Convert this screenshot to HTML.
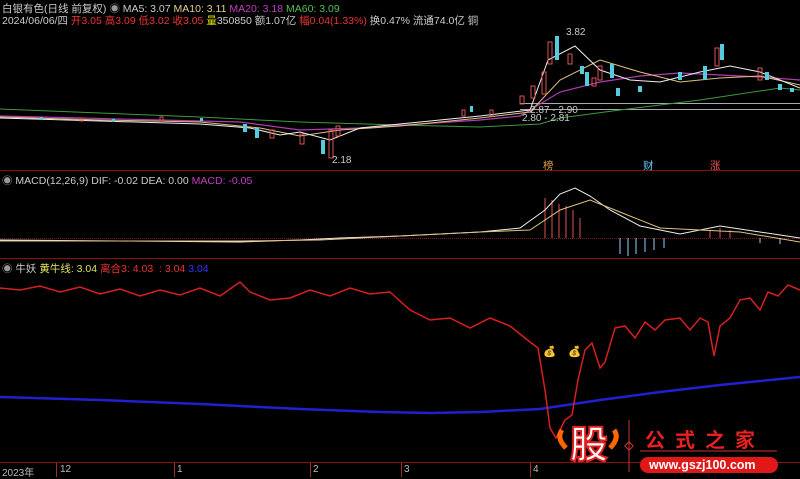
<!DOCTYPE html>
<html><head><meta charset="utf-8"><style>
body{margin:0;background:#000;width:800px;height:477px;overflow:hidden;font-family:"Liberation Sans","Noto Sans CJK SC",sans-serif}
.t{position:absolute;font-size:10.5px;white-space:nowrap;color:#ccc}
</style></head><body>
<svg width="800" height="477" style="position:absolute;left:0;top:0" xmlns="http://www.w3.org/2000/svg">
<line x1="0" y1="170.5" x2="800" y2="170.5" stroke="#8a1010"/>
<line x1="0" y1="258.5" x2="800" y2="258.5" stroke="#8a1010"/>
<line x1="0" y1="462.5" x2="800" y2="462.5" stroke="#8a1010"/>
<line x1="520" y1="103.5" x2="800" y2="103.5" stroke="#aaa"/>
<line x1="520" y1="109.5" x2="800" y2="109.5" stroke="#aaa"/>
<polyline fill="none" stroke="#3c9a3c" stroke-width="1" points="0,109 100,113 200,117 300,122 400,125 480,127 540,124 560,118 620,110 700,100 780,88 800,90"/>
<polyline fill="none" stroke="#b03cb0" stroke-width="1.2" points="0,116 80,118 160,120 240,122 300,130 360,128 420,124 480,120 520,116 560,92 600,82 640,76 680,73 720,75 760,77 800,80"/>
<polyline fill="none" stroke="#e0c080" stroke-width="1" points="0,117 100,120 200,122 260,128 300,136 340,130 400,126 480,118 530,112 560,80 600,60 640,72 680,82 720,78 760,76 800,85"/>
<polyline fill="none" stroke="#eee" stroke-width="1" points="0,118 100,121 200,124 250,128 280,135 300,132 330,140 360,128 420,122 480,116 530,110 548,60 575,46 600,70 630,80 660,82 700,72 730,66 760,72 800,88"/>
<g stroke-width="1">
<rect x="40" y="117" width="3" height="3" fill="#5cd"/><rect x="80" y="118" width="3" height="3" fill="none" stroke="#d55"/><rect x="112" y="119" width="3" height="3" fill="#5cd"/><rect x="160" y="117" width="3" height="4" fill="none" stroke="#d55"/><rect x="200" y="118" width="3" height="3" fill="#5cd"/>
<rect x="243" y="124" width="4" height="8" fill="#5cd"/><rect x="255" y="128" width="4" height="10" fill="#5cd"/>
<rect x="270" y="130" width="4" height="8" fill="none" stroke="#d55"/><rect x="300" y="134" width="4" height="10" fill="none" stroke="#d55"/>
<rect x="321" y="140" width="4" height="14" fill="#5cd"/><rect x="329" y="130" width="4" height="28" fill="none" stroke="#d55"/><rect x="336" y="126" width="4" height="10" fill="none" stroke="#d55"/>
<rect x="462" y="110" width="3" height="6" fill="none" stroke="#d55"/><rect x="470" y="106" width="3" height="6" fill="#5cd"/><rect x="490" y="110" width="3" height="6" fill="none" stroke="#d55"/>
<rect x="520" y="96" width="4" height="8" fill="none" stroke="#d55"/><rect x="531" y="86" width="4" height="12" fill="none" stroke="#d55"/>
<rect x="542" y="72" width="4" height="22" fill="none" stroke="#d55"/><rect x="548" y="42" width="4" height="22" fill="none" stroke="#d55"/>
<rect x="555" y="36" width="4" height="24" fill="#5cd"/><rect x="568" y="54" width="4" height="10" fill="none" stroke="#d55"/>
<rect x="580" y="66" width="4" height="8" fill="#5cd"/><rect x="585" y="72" width="4" height="14" fill="#5cd"/>
<rect x="592" y="78" width="4" height="8" fill="none" stroke="#d55"/><rect x="598" y="66" width="4" height="14" fill="none" stroke="#d55"/>
<rect x="610" y="64" width="4" height="14" fill="#5cd"/><rect x="616" y="88" width="4" height="8" fill="#5cd"/>
<rect x="638" y="86" width="4" height="6" fill="#5cd"/><rect x="678" y="72" width="4" height="8" fill="#5cd"/>
<rect x="703" y="66" width="4" height="14" fill="#5cd"/><rect x="715" y="48" width="4" height="18" fill="none" stroke="#d55"/>
<rect x="720" y="44" width="4" height="16" fill="#5cd"/><rect x="758" y="68" width="4" height="12" fill="none" stroke="#d55"/>
<rect x="765" y="72" width="4" height="8" fill="#5cd"/><rect x="778" y="84" width="4" height="6" fill="#5cd"/><rect x="790" y="88" width="4" height="4" fill="#5cd"/>
</g>
<line x1="0" y1="238.5" x2="800" y2="238.5" stroke="#7a2020" stroke-dasharray="1,1"/>
<g stroke="#d55"><line x1="545" y1="238" x2="545" y2="198"/><line x1="552" y1="238" x2="552" y2="200"/><line x1="559" y1="238" x2="559" y2="204"/><line x1="566" y1="238" x2="566" y2="206"/><line x1="573" y1="238" x2="573" y2="210"/><line x1="580" y1="238" x2="580" y2="218"/><line x1="710" y1="238" x2="710" y2="230"/><line x1="720" y1="238" x2="720" y2="228"/><line x1="730" y1="238" x2="730" y2="230"/></g>
<g stroke="#9cf"><line x1="620" y1="238" x2="620" y2="254"/><line x1="628" y1="238" x2="628" y2="256"/><line x1="636" y1="238" x2="636" y2="254"/><line x1="645" y1="238" x2="645" y2="252"/><line x1="654" y1="238" x2="654" y2="250"/><line x1="664" y1="238" x2="664" y2="248"/><line x1="760" y1="238" x2="760" y2="243"/><line x1="780" y1="238" x2="780" y2="244"/></g>
<polyline fill="none" stroke="#eee" points="0,240 120,241 240,242 300,240 340,238 400,236 480,232 520,228 545,210 560,194 575,188 590,196 610,210 640,226 680,234 720,226 760,232 800,238"/>
<polyline fill="none" stroke="#e0c080" points="0,241 120,241 240,241 320,240 400,236 480,232 530,230 560,210 590,200 620,212 660,228 700,230 740,232 800,242"/>
<polyline fill="none" stroke="#2020d0" stroke-width="2.5" points="0,397 100,400 200,404 300,409 380,412 430,413 480,412 540,409 600,400 660,392 720,385 800,377"/>
<polyline fill="none" stroke="#d62020" stroke-width="1.5" points="0,288 20,290 40,286 60,292 80,287 100,294 120,289 140,296 160,290 180,295 200,288 220,296 240,282 250,292 270,300 290,298 310,290 330,296 350,288 370,294 390,292 410,310 430,320 450,318 470,328 490,318 510,326 530,342 538,348 545,390 550,428 556,438 565,420 572,415 578,380 585,350 592,343 600,368 605,362 615,328 625,326 635,338 645,322 655,330 665,320 680,318 690,330 700,318 708,322 714,356 720,326 730,318 740,300 750,298 760,310 768,292 778,296 788,285 800,290"/>
<g stroke="#a03030"><line x1="56.5" y1="463" x2="56.5" y2="477"/><line x1="174.5" y1="463" x2="174.5" y2="477"/><line x1="310.5" y1="463" x2="310.5" y2="477"/><line x1="401.5" y1="463" x2="401.5" y2="477"/><line x1="530.5" y1="463" x2="530.5" y2="477"/></g>
<line x1="629" y1="420" x2="629" y2="472" stroke="#c33"/>
<rect x="626" y="443" width="6" height="6" fill="none" stroke="#c33" transform="rotate(45 629 446)"/>
<line x1="640" y1="451" x2="777" y2="451" stroke="#c33"/>
<rect x="640" y="457" width="138" height="16" rx="8" fill="#e01818"/>
<path d="M562,430 q-6,8 4,18" stroke="#f60" stroke-width="5" fill="none"/>
<path d="M614,430 q6,8 -4,18" stroke="#f60" stroke-width="5" fill="none"/>
</svg>
<div class="t" style="left:2px;top:1px">白银有色(日线 前复权) <span style="color:#999">◉</span> MA5: 3.07 <span style="color:#e0d090">MA10: 3.11</span> <span style="color:#c040c0">MA20: 3.18</span> <span style="color:#50c050">MA60: 3.09</span></div>
<div class="t" style="left:2px;top:13px">2024/06/06/四 <span style="color:#e33">开3.05 高3.09 低3.02 收3.05</span> <span style="color:#dd0">量</span>350850 额1.07亿 <span style="color:#e33">幅0.04(1.33%)</span> 换0.47% 流通74.0亿 铜</div>
<div class="t" style="left:566px;top:27px;font-size:10px">3.82</div>
<div class="t" style="left:530px;top:105px;font-size:10px">2.87 - 2.90</div>
<div class="t" style="left:522px;top:113px;font-size:10px">2.80 - 2.81</div>
<div class="t" style="left:332px;top:155px;font-size:10px">2.18</div>
<div class="t" style="left:543px;top:158px;color:#e0a040">榜</div>
<div class="t" style="left:643px;top:158px;color:#6cf">财</div>
<div class="t" style="left:710px;top:158px;color:#e55">涨</div>
<div class="t" style="left:2px;top:173px"><span style="color:#999">◉</span> MACD(12,26,9) DIF: -0.02 DEA: 0.00 <span style="color:#c040c0">MACD: -0.05</span></div>
<div class="t" style="left:2px;top:261px"><span style="color:#999">◉</span> 牛妖 <span style="color:#e0e060">黄牛线: 3.04</span> <span style="color:#e33">离合3: 4.03 &nbsp;: 3.04</span> <span style="color:#33f">3.04</span></div>
<div class="t" style="left:543px;top:345px">💰</div><div class="t" style="left:568px;top:345px">💰</div>
<div class="t" style="left:2px;top:464px;font-size:10px;color:#bbb">2023年</div>
<div class="t" style="left:60px;top:464px;font-size:10px;color:#bbb">12</div>
<div class="t" style="left:177px;top:464px;font-size:10px;color:#bbb">1</div>
<div class="t" style="left:313px;top:464px;font-size:10px;color:#bbb">2</div>
<div class="t" style="left:404px;top:464px;font-size:10px;color:#bbb">3</div>
<div class="t" style="left:533px;top:464px;font-size:10px;color:#bbb">4</div>
<div class="t" style="left:570px;top:422px;font-size:38px;font-weight:bold;color:#fff;-webkit-text-stroke:2px #e02020;line-height:48px">股</div>
<div class="t" style="left:645px;top:424px;font-size:20px;color:#e82020;letter-spacing:10px;font-weight:bold">公式之家</div>
<div class="t" style="left:649px;top:458px;font-size:12.5px;color:#fff;font-weight:bold">www.gszj100.com</div>
</body></html>
